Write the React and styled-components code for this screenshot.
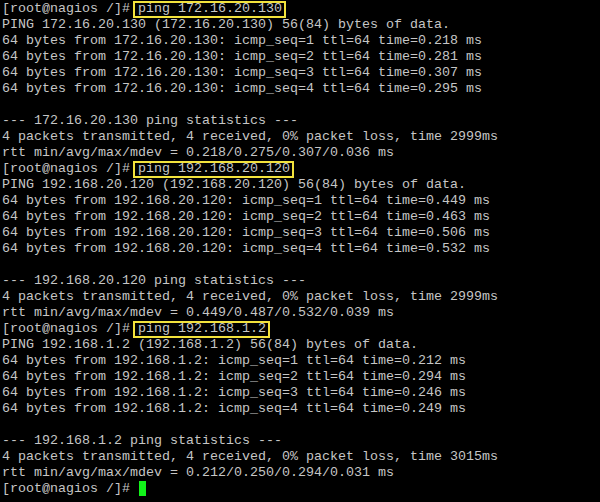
import React from "react";
import styled, { createGlobalStyle } from "styled-components";

const GlobalStyle = createGlobalStyle`
  html, body {
    margin: 0;
    padding: 0;
    background: #000;
  }
  body {
    width: 600px;
    height: 502px;
    overflow: hidden;
  }
`;

const sessions = [
  {
    host: "172.16.20.130",
    times: ["0.218", "0.281", "0.307", "0.295"],
    stats: "rtt min/avg/max/mdev = 0.218/0.275/0.307/0.036 ms",
    total: "2999ms",
  },
  {
    host: "192.168.20.120",
    times: ["0.449", "0.463", "0.506", "0.532"],
    stats: "rtt min/avg/max/mdev = 0.449/0.487/0.532/0.039 ms",
    total: "2999ms",
  },
  {
    host: "192.168.1.2",
    times: ["0.212", "0.294", "0.246", "0.249"],
    stats: "rtt min/avg/max/mdev = 0.212/0.250/0.294/0.031 ms",
    total: "3015ms",
  },
];

const PROMPT = "[root@nagios /]#";

const Terminal = styled.div`
  width: 600px;
  height: 502px;
  box-sizing: border-box;
  padding: 1px 2px;
  background: #000;
  color: #c6c6c6;
  font-family: "Liberation Mono", "Courier New", monospace;
  font-size: 13.333px;
  line-height: 16px;
`;

const Line = styled.div`
  height: 16px;
  white-space: pre;
`;

const Command = styled.span`
  display: inline-block;
  vertical-align: top;
  box-sizing: border-box;
  height: 17px;
  line-height: 12px;
  margin-left: 3px;
  padding: 0 2px 0 3px;
  border: 2px solid #f2e23c;
`;

const Cursor = styled.span`
  display: inline-block;
  vertical-align: top;
  width: 7px;
  height: 15px;
  margin: 0 0 0 9px;
  background: #12f21a;
`;

const Session = ({ host, times, stats, total }) => (
  <>
    <Line>
      {PROMPT}
      <Command>ping {host}</Command>
    </Line>
    <Line>
      PING {host} ({host}) 56(84) bytes of data.
    </Line>
    {times.map((t, i) => (
      <Line key={i}>
        64 bytes from {host}: icmp_seq={i + 1} ttl=64 time={t} ms
      </Line>
    ))}
    <Line />
    <Line>--- {host} ping statistics ---</Line>
    <Line>
      4 packets transmitted, 4 received, 0% packet loss, time {total}
    </Line>
    <Line>{stats}</Line>
  </>
);

export default function App() {
  return (
    <>
      <GlobalStyle />
      <Terminal>
        {sessions.map((s) => (
          <Session key={s.host} {...s} />
        ))}
        <Line>
          {PROMPT}
          <Cursor />
        </Line>
      </Terminal>
    </>
  );
}
